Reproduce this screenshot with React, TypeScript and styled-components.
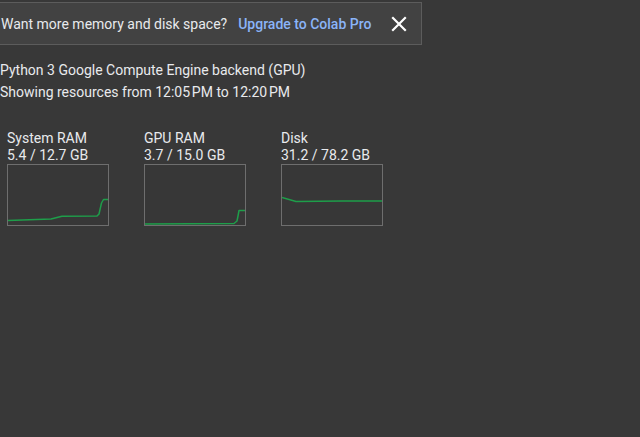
import * as React from 'react';
import styled, { createGlobalStyle } from 'styled-components';

const GlobalStyle = createGlobalStyle`
  html, body {
    margin: 0;
    padding: 0;
    background: #383838;
  }
  body {
    font-family: Roboto, "Liberation Sans", Arial, sans-serif;
    color: #e8eaed;
    overflow: hidden;
  }
`;

const Page = styled.div`
  width: 640px;
  height: 437px;
  background: #383838;
  padding-top: 2px;
  box-sizing: border-box;
`;

const Banner = styled.div`
  display: inline-flex;
  align-items: center;
  box-sizing: border-box;
  width: 423px;
  height: 43px;
  margin-left: -1px;
  padding: 0 13px 0 1px;
  background: #424242;
  border: 1px solid #5c5c5c;
  font-size: 14px;
`;

const BannerText = styled.span`
  color: #e8eaed;
  white-space: nowrap;
`;

const UpgradeLink = styled.a`
  margin-left: 11px;
  color: #8ab4f8;
  font-weight: 500;
  white-space: nowrap;
  text-decoration: none;
  cursor: pointer;
`;

const CloseButton = styled.button`
  margin-left: auto;
  display: flex;
  align-items: center;
  justify-content: center;
  width: 18px;
  height: 18px;
  padding: 0;
  border: none;
  background: transparent;
  cursor: pointer;
`;

const Info = styled.div`
  margin-top: 14px;
  font-size: 14px;
  line-height: 22px;
  color: #e8eaed;
`;

const Meters = styled.div`
  display: flex;
  gap: 35px;
  margin-top: 27px;
  padding-left: 7px;
`;

const Meter = styled.div`
  display: flex;
  flex-direction: column;
`;

const MeterLabel = styled.div`
  font-size: 14px;
  line-height: 17px;
  color: #e8eaed;
  white-space: nowrap;
`;

const Chart = styled.div`
  margin-top: 0;
  width: 102px;
  height: 62px;
  box-sizing: border-box;
  border: 1px solid #6e6e6e;
  background: #373737;
`;

type MeterData = {
  name: string;
  usage: string;
  points: string;
};

const meters: MeterData[] = [
  {
    name: 'System RAM',
    usage: '5.4 / 12.7 GB',
    points: '0,55.5 43,54 54,51.2 89,51 91,49 93.5,38 95.5,34.5 100,34.5',
  },
  {
    name: 'GPU RAM',
    usage: '3.7 / 15.0 GB',
    points: '0,59 89,58.5 92,56 93,51 94,45.5 100,45.5',
  },
  {
    name: 'Disk',
    usage: '31.2 / 78.2 GB',
    points: '0,32.5 14,36.5 60,36 100,36',
  },
];

const UsageChart: React.FC<{ points: string }> = ({ points }) => (
  <Chart>
    <svg width="100" height="60" viewBox="0 0 100 60">
      <polyline
        points={points}
        fill="none"
        stroke="#1e9e4a"
        strokeWidth="1.5"
        strokeLinejoin="round"
      />
    </svg>
  </Chart>
);

export default function App() {
  return (
    <Page>
      <GlobalStyle />
      <Banner>
        <BannerText>Want more memory and disk space?</BannerText>
        <UpgradeLink>Upgrade to Colab Pro</UpgradeLink>
        <CloseButton aria-label="close">
          <svg width="16" height="16" viewBox="0 0 16 16">
            <path
              d="M2 2 L14 14 M14 2 L2 14"
              stroke="#ffffff"
              strokeWidth="2.2"
              strokeLinecap="square"
            />
          </svg>
        </CloseButton>
      </Banner>
      <Info>
        <div>Python 3 Google Compute Engine backend (GPU)</div>
        <div>Showing resources from 12:05{'\u202F'}PM to 12:20{'\u202F'}PM</div>
      </Info>
      <Meters>
        {meters.map(({ name, usage, points }) => (
          <Meter key={name}>
            <MeterLabel>{name}</MeterLabel>
            <MeterLabel>{usage}</MeterLabel>
            <UsageChart points={points} />
          </Meter>
        ))}
      </Meters>
    </Page>
  );
}
